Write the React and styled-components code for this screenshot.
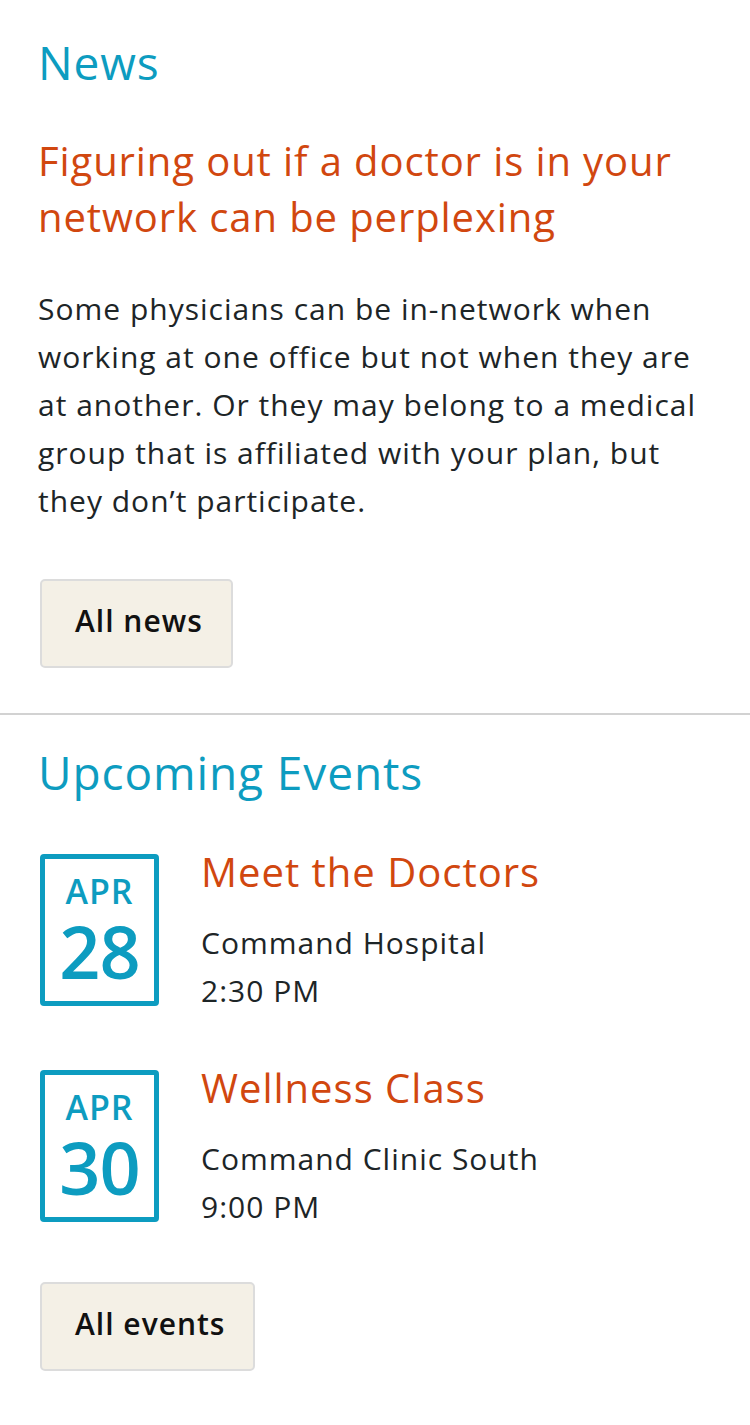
import styled, { createGlobalStyle } from "styled-components";

const GlobalStyle = createGlobalStyle`
  html, body {
    margin: 0;
    padding: 0;
    background: #fff;
    font-family: "Open Sans", "Noto Sans", sans-serif;
    color: #1d2527;
    letter-spacing: 1px;
  }
  * { box-sizing: border-box; }
`;

const Page = styled.div`
  width: 750px;
`;

const Section = styled.section`
  padding: ${(p) => p.$pad};
  border-top: ${(p) => (p.$divider ? "2px solid #d2d2d2" : "none")};
`;

const SectionTitle = styled.h2`
  margin: 0;
  padding-left: 38px;
  font-size: 46px;
  line-height: 55px;
  font-weight: 400;
  letter-spacing: 0.9px;
  color: #0d9cc0;
`;

const Headline = styled.h3`
  margin: 43px 0 0;
  padding: 0 38px;
  font-size: 40px;
  line-height: 56px;
  font-weight: 400;
  letter-spacing: 0.9px;
  color: #d1470f;
`;

const Body = styled.p`
  margin: 40px 0 0;
  padding: 0 38px;
  font-size: 30px;
  line-height: 48px;
  color: #1d2527;
`;

const Button = styled.button`
  display: inline-block;
  margin: ${(p) => p.$top}px 0 0 40px;
  padding: 22px 28px 27px 33px;
  background: #f4f0e6;
  border: 2px solid #dcdcdc;
  border-radius: 5px;
  font-family: "Open Sans", sans-serif;
  font-size: 30px;
  line-height: 36px;
  font-weight: 600;
  letter-spacing: 1px;
  color: #111;
  cursor: pointer;
`;

const EventList = styled.div`
  display: flex;
  flex-direction: column;
  gap: 45px;
  margin-top: 44px;
`;

const EventRow = styled.div`
  display: flex;
  align-items: flex-start;
  padding-left: 40px;
`;

const DateBox = styled.div`
  flex: none;
  width: 119px;
  height: 152px;
  margin-top: 10px;
  border: 5px solid #0d9cc0;
  border-radius: 4px;
  display: flex;
  flex-direction: column;
  align-items: center;
  padding-top: 12px;
  color: #0d9cc0;
  font-weight: 600;
`;

const Month = styled.div`
  font-size: 34px;
  line-height: 40px;
  letter-spacing: 1px;
`;

const Day = styled.div`
  margin-top: 10px;
  font-size: 72px;
  line-height: 60px;
  letter-spacing: -1px;
`;

const EventInfo = styled.div`
  margin-left: 42px;
`;

const EventTitle = styled.h4`
  margin: 0;
  font-size: 40px;
  line-height: 56px;
  font-weight: 400;
  letter-spacing: 1px;
  color: #d1470f;
`;

const EventMeta = styled.div`
  margin-top: 19px;
  font-size: 30px;
  line-height: 48px;
`;

const events = [
  { month: "APR", day: "28", title: "Meet the Doctors", place: "Command Hospital", time: "2:30 PM" },
  { month: "APR", day: "30", title: "Wellness Class", place: "Command Clinic South", time: "9:00 PM" },
];

const App = () => {
  return (
    <Page>
      <GlobalStyle />
      <Section $pad="35px 0 45px">
        <SectionTitle>News</SectionTitle>
        <Headline>Figuring out if a doctor is in your network can be perplexing</Headline>
        <Body>
          Some physicians can be in-network when working at one office but not when they are at
          another. Or they may belong to a medical group that is affiliated with your plan, but they
          don’t participate.
        </Body>
        <Button $top={54}>All news</Button>
      </Section>
      <Section $divider $pad="30px 0 55px">
        <SectionTitle>Upcoming Events</SectionTitle>
        <EventList>
          {events.map((ev) => (
            <EventRow key={ev.title}>
              <DateBox>
                <Month>{ev.month}</Month>
                <Day>{ev.day}</Day>
              </DateBox>
              <EventInfo>
                <EventTitle>{ev.title}</EventTitle>
                <EventMeta>
                  <div>{ev.place}</div>
                  <div>{ev.time}</div>
                </EventMeta>
              </EventInfo>
            </EventRow>
          ))}
        </EventList>
        <Button $top={51}>All events</Button>
      </Section>
    </Page>
  );
};

export default App;
